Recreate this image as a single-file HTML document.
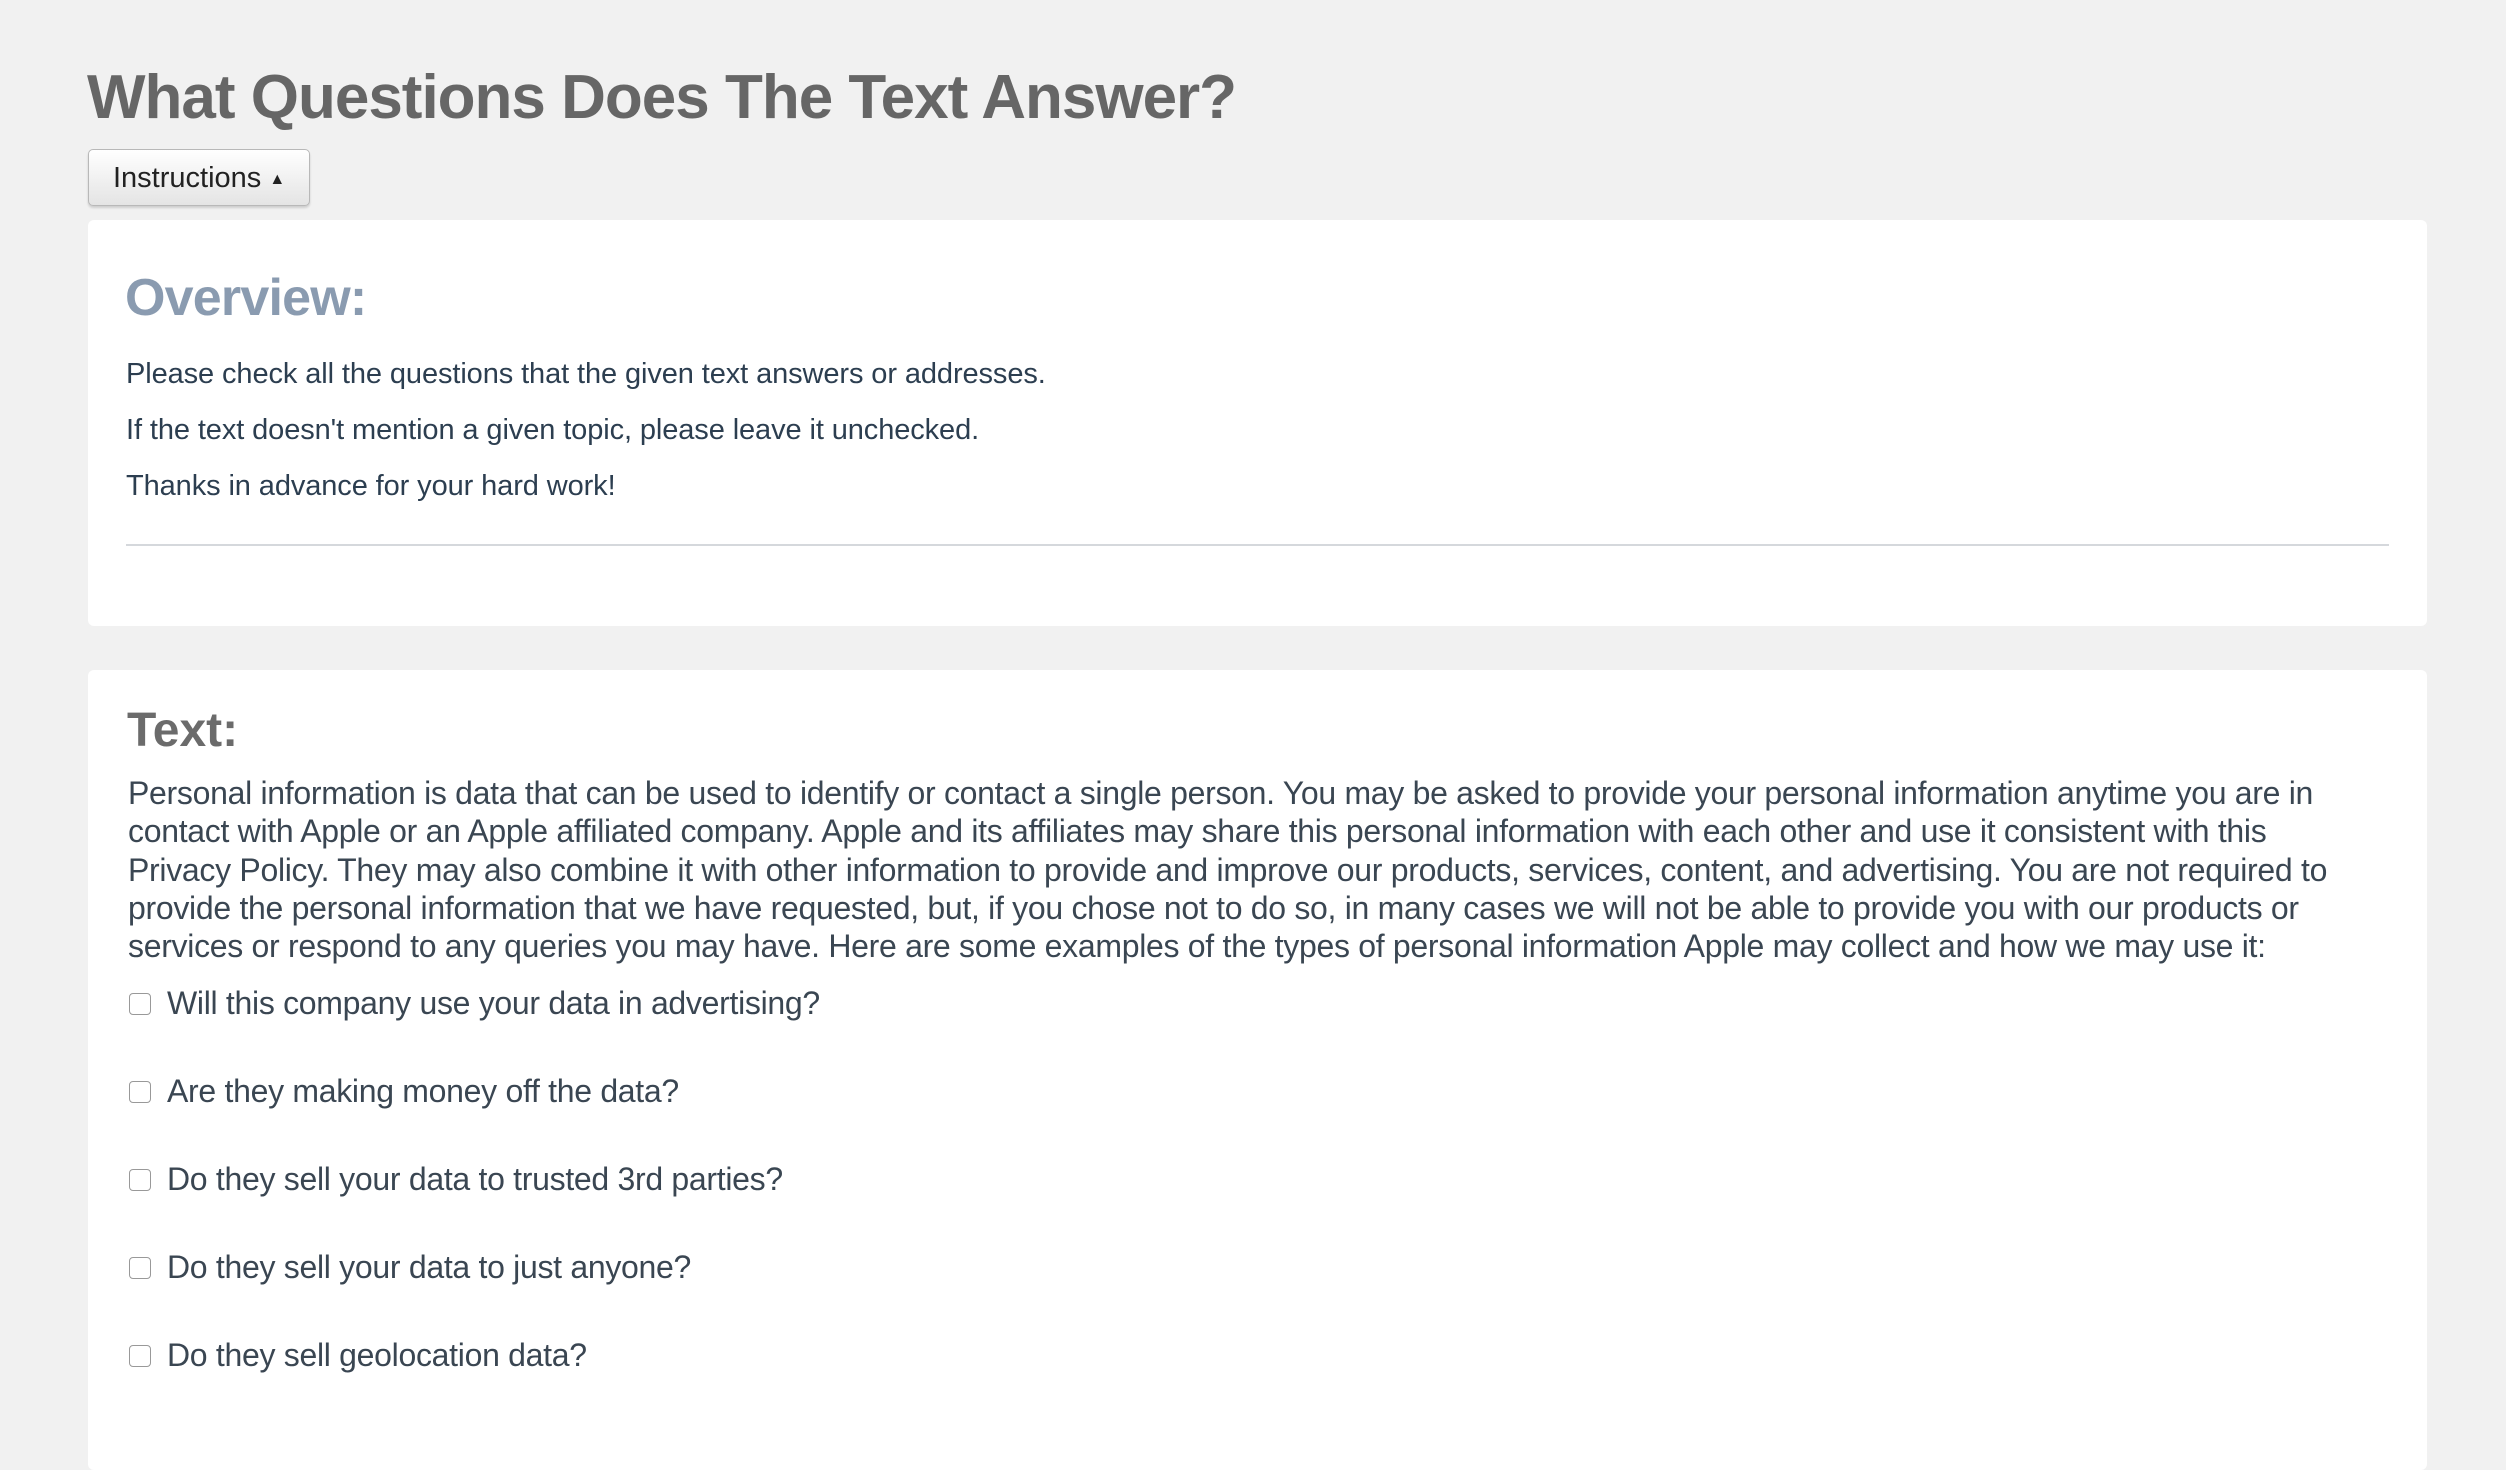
<!DOCTYPE html>
<html><head><meta charset="utf-8"><style>
html,body{margin:0;padding:0}
body{width:2506px;height:1424px;overflow:hidden;background:#f1f1f1;font-family:"Liberation Sans",sans-serif;position:relative}
.abs{position:absolute;white-space:nowrap}
h1{position:absolute;left:87px;top:62px;margin:0;font-size:62px;font-weight:bold;color:#666;letter-spacing:-1px}
.btn{position:absolute;left:88px;top:149px;width:222px;height:57px;border:1px solid #b8b8b8;border-radius:5px;background:linear-gradient(#fff,#e4e4e4);box-shadow:0 2px 2px rgba(0,0,0,.15);font-size:29px;color:#222;line-height:57px;box-sizing:border-box;padding-left:24px;letter-spacing:0}
.card{position:absolute;left:88px;width:2339px;background:#fff;border-radius:6px}
.ov{color:#8a9bb0;font-size:52px;font-weight:bold;letter-spacing:-0.8px}
.p{color:#2c3e50;font-size:29px;letter-spacing:-0.1px}
.tx{color:#6b6b6b;font-size:48px;font-weight:bold;letter-spacing:0}
.para{color:#3a4652;font-size:32px;line-height:38.3px;letter-spacing:-0.3px}
.cb{position:absolute;left:129px;width:20px;height:20px;border:1.5px solid #999;border-radius:4px;background:#fff}
.q{color:#3a4652;font-size:32px;letter-spacing:-0.3px;left:167px}
</style></head><body>
<h1>What Questions Does The Text Answer?</h1>
<div class="btn">Instructions <span style="font-size:16px;vertical-align:3px">&#9650;</span></div>
<div class="card" style="top:220px;height:406px"></div>
<div class="abs ov" style="left:125px;top:268px">Overview:</div>
<div class="abs p" style="left:126px;top:358px">Please check all the questions that the given text answers or addresses.</div>
<div class="abs p" style="left:126px;top:414px">If the text doesn't mention a given topic, please leave it unchecked.</div>
<div class="abs p" style="left:126px;top:470px">Thanks in advance for your hard work!</div>
<div class="abs" style="left:126px;top:544px;width:2263px;height:2px;background:#d5d8dc"></div>
<div class="card" style="top:670px;height:800px"></div>
<div class="abs tx" style="left:127px;top:703px">Text:</div>
<div class="abs para" style="left:128px;top:774px">Personal information is data that can be used to identify or contact a single person. You may be asked to provide your personal information anytime you are in<br>contact with Apple or an Apple affiliated company. Apple and its affiliates may share this personal information with each other and use it consistent with this<br>Privacy Policy. They may also combine it with other information to provide and improve our products, services, content, and advertising. You are not required to<br>provide the personal information that we have requested, but, if you chose not to do so, in many cases we will not be able to provide you with our products or<br>services or respond to any queries you may have. Here are some examples of the types of personal information Apple may collect and how we may use it:</div>
<div class="cb" style="top:993px"></div><div class="abs q" style="top:985px">Will this company use your data in advertising?</div>
<div class="cb" style="top:1081px"></div><div class="abs q" style="top:1073px">Are they making money off the data?</div>
<div class="cb" style="top:1169px"></div><div class="abs q" style="top:1161px">Do they sell your data to trusted 3rd parties?</div>
<div class="cb" style="top:1257px"></div><div class="abs q" style="top:1249px">Do they sell your data to just anyone?</div>
<div class="cb" style="top:1345px"></div><div class="abs q" style="top:1337px">Do they sell geolocation data?</div>
</body></html>
